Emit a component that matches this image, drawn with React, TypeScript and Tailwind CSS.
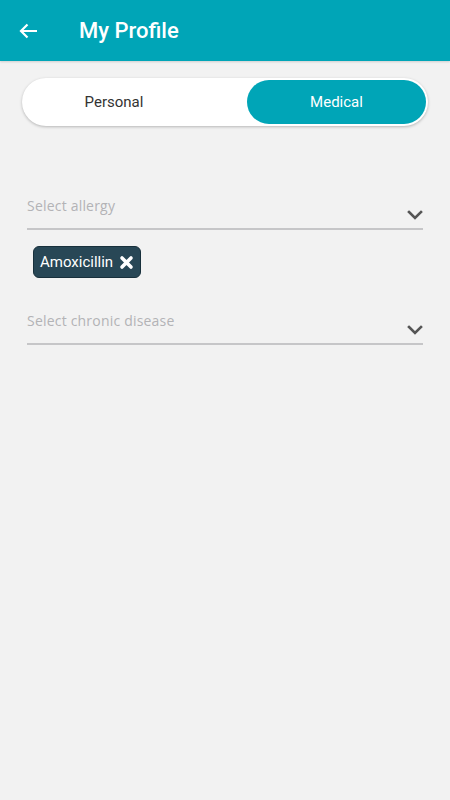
import React, { useState } from 'react';

function Chevron() {
  return (
    <svg width="16" height="10" viewBox="0 0 16 10" className="shrink-0">
      <path d="M2 2 L8 8 L14 2" fill="none" stroke="#555555" strokeWidth="2.6" strokeLinecap="square" />
    </svg>
  );
}

function SelectField({ placeholder }: { placeholder: string }) {
  return (
    <div className="flex items-end justify-between border-b-2 border-[#c6c6c8] pb-[4px]">
      <span className="text-[14px] text-[#b3b3b6] tracking-[0.2px] mb-[8px]" style={{ fontFamily: '"Open Sans", sans-serif' }}>
        {placeholder}
      </span>
      <div className="mb-[4px]">
        <Chevron />
      </div>
    </div>
  );
}

export default function App() {
  const [tab, setTab] = useState<'personal' | 'medical'>('medical');

  return (
    <div className="w-[450px] h-[800px] bg-[#f2f2f2] flex flex-col" style={{ fontFamily: 'Roboto, sans-serif' }}>
      {/* Header */}
      <header className="h-[61px] bg-[#00a5b7] flex items-center px-[19px] shadow-[0_1px_2px_rgba(0,0,0,0.15)]">
        <svg width="19" height="16" viewBox="0 0 19 16">
          <path d="M18 8 H2.5 M8.5 1.5 L2 8 L8.5 14.5" fill="none" stroke="#ffffff" strokeWidth="2.2" />
        </svg>
        <h1 className="ml-[41px] text-white text-[22px] font-medium">My Profile</h1>
      </header>

      {/* Tabs */}
      <div className="px-[22px] pt-[17px]">
        <div className="h-[48px] bg-white rounded-full shadow-[0_1px_3px_rgba(0,0,0,0.25)] flex justify-between p-[2px]">
          <button
            onClick={() => setTab('personal')}
            className={`w-[180px] rounded-full text-[15px] ${tab === 'personal' ? 'bg-[#00a5b7] text-white' : 'text-[#333333]'}`}
          >
            Personal
          </button>
          <button
            onClick={() => setTab('medical')}
            className={`w-[179px] rounded-full text-[15px] ${tab === 'medical' ? 'bg-[#00a5b7] text-white' : 'text-[#333333]'}`}
          >
            Medical
          </button>
        </div>
      </div>

      {/* Medical fields */}
      <div className="px-[27px] pt-[69px] flex flex-col">
        <SelectField placeholder="Select allergy" />
        <div className="pt-[16px] pl-[6px] flex">
          <span className="h-[32px] flex items-center gap-[6px] px-[6px] rounded-[6px] bg-[#284756] border border-[#18303c] text-white text-[15px]">
            Amoxicillin
            <svg width="15" height="15" viewBox="0 0 15 15">
              <path d="M3 3 L12 12 M12 3 L3 12" stroke="#ffffff" strokeWidth="3.6" strokeLinecap="round" />
            </svg>
          </span>
        </div>
        <div className="pt-[32px]">
          <SelectField placeholder="Select chronic disease" />
        </div>
      </div>
    </div>
  );
}
